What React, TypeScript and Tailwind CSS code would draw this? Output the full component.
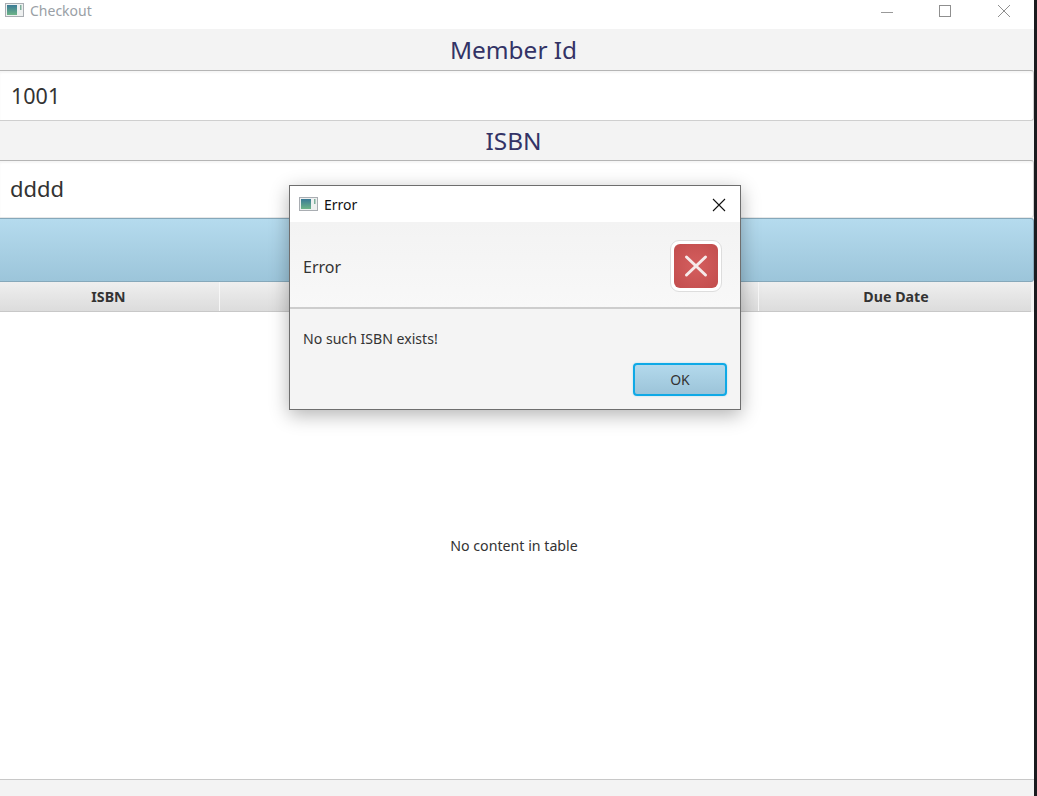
import React from "react";

const AppIcon = () => (
  <svg width="20" height="15" viewBox="0 0 20 15" className="shrink-0">
    <rect x="0.5" y="0.5" width="18" height="13" fill="#eef0f0" stroke="#a9adb2" />
    <defs>
      <linearGradient id="ic" x1="0" y1="0" x2="0" y2="1">
        <stop offset="0" stopColor="#3a7a96" />
        <stop offset="1" stopColor="#6db487" />
      </linearGradient>
    </defs>
    <rect x="2" y="2" width="10" height="10" fill="url(#ic)" />
    <rect x="15" y="2" width="1.5" height="5" fill="#7fb09c" />
  </svg>
);

const Label = ({ children, h }: { children: React.ReactNode; h: string }) => (
  <div className={`flex items-center justify-center bg-[#f3f3f3] pr-[7px] pt-[1px] text-[24.4px] leading-none text-[#333366] ${h}`}>
    {children}
  </div>
);

export default function App() {
  return (
    <div className="relative flex h-[796px] w-[1037px] overflow-hidden bg-[#1b1b1f] font-['Noto_Sans',sans-serif]">
      <div className="flex w-[1034px] flex-col bg-[#f3f3f3]">
        {/* Title bar */}
        <div className="flex h-[29px] items-center justify-between bg-white">
          <div className="flex items-center gap-[5px] pb-[8px] pl-[5px]">
            <AppIcon />
            <span className="text-[14px] leading-none text-[#9a9fa6]">Checkout</span>
          </div>
          <div className="flex items-center pb-[8px] text-[#8c8c8c]">
            <svg width="14" height="14" viewBox="0 0 14 14" className="mr-[44px]">
              <path d="M1 8.5H13" stroke="#999" strokeWidth="1" />
            </svg>
            <svg width="14" height="14" viewBox="0 0 14 14" className="mr-[45px]">
              <rect x="1.5" y="1.5" width="11" height="11" fill="none" stroke="#8f8f8f" strokeWidth="1" />
            </svg>
            <svg width="14" height="14" viewBox="0 0 14 14" className="mr-[23px]">
              <path d="M1 1L13 13M13 1L1 13" stroke="#8f8f8f" strokeWidth="1" />
            </svg>
          </div>
        </div>

        <Label h="h-[41px]">Member Id</Label>
        <div className="flex h-[51px] items-center rounded-r-[3px] border-y border-r border-t-[#b5b5b5] border-r-[#cfcfcf] border-b-[#cfcfcf] bg-white pl-[11px] text-[21.5px] leading-none text-[#333] shadow-[inset_0_2px_2px_rgba(0,0,0,0.04)]">
          1001
        </div>
        <Label h="h-[39px]">ISBN</Label>
        <div className="flex h-[58px] items-center rounded-r-[3px] border-y border-r border-t-[#b5b5b5] border-r-[#cfcfcf] border-b-[#e8e8e8] bg-white pb-[2px] pl-[10px] text-[22px] leading-none text-[#333] shadow-[inset_0_2px_2px_rgba(0,0,0,0.04)]">
          dddd
        </div>

        {/* Blue button bar */}
        <div className="h-[64px] rounded-r-[3px] border-y border-r border-y-[#86a8ba] border-r-[#86a8ba] bg-gradient-to-b from-[#b5dbee] to-[#9cc5da]" />

        {/* Table header */}
        <div className="mr-[3px] flex h-[30px] border-b border-[#c8c8c8] bg-gradient-to-b from-[#efefef] to-[#dcdcdc] text-[14.2px] font-bold leading-none text-[#333]">
          <div className="flex w-[220px] items-center justify-center border-r border-[#f7f7f7] pr-[2px] pt-[2px]">ISBN</div>
          <div className="flex w-[269px] border-r border-[#f7f7f7]" />
          <div className="flex w-[270px] border-r border-[#f7f7f7]" />
          <div className="flex flex-1 items-center justify-center pl-[2px] pt-[2px]">Due Date</div>
        </div>

        {/* Table body */}
        <div className="flex h-[467px] items-center justify-center bg-white pr-[6px] pt-[1px] text-[14.2px] leading-none text-[#333]">
          No content in table
        </div>

        {/* Footer */}
        <div className="flex-1 border-t border-[#c8c8c8] bg-[#f3f3f3]" />
      </div>

      {/* Dialog */}
      <div className="absolute left-[289px] top-[185px] flex h-[225px] w-[452px] flex-col border border-[#6e6e6e] bg-[#f4f4f4] shadow-[0_5px_18px_rgba(0,0,0,0.3)]">
        <div className="flex h-[36px] items-center justify-between bg-white pl-[9px] pr-[14px] pt-[1px]">
          <div className="flex items-center gap-[5px]">
            <AppIcon />
            <span className="text-[14px] leading-none text-[#111]">Error</span>
          </div>
          <svg width="14" height="14" viewBox="0 0 14 14">
            <path d="M1 1L13 13M13 1L1 13" stroke="#111" strokeWidth="1.1" />
          </svg>
        </div>
        <div className="flex h-[87px] items-center justify-between border-b-2 border-[#cdcdcd] bg-gradient-to-b from-[#f3f3f3] to-[#f8f8f8] pl-[13px] pr-[18px] pt-[3px]">
          <span className="pt-[2px] text-[16px] leading-none text-[#333]">Error</span>
          <div className="flex h-[52px] w-[52px] items-center justify-center rounded-[9px] border border-[#dddddd] bg-white">
            <div className="flex h-[44px] w-[44px] items-center justify-center rounded-[6px] bg-[radial-gradient(circle,#d45e5e,#c24d4d)]">
              <svg width="24" height="24" viewBox="0 0 24 24">
                <path d="M2.5 3L21.5 21M21.5 3L2.5 21" stroke="#f6eaea" strokeWidth="3" strokeLinecap="round" />
              </svg>
            </div>
          </div>
        </div>
        <div className="flex flex-1 flex-col px-[13px]">
          <div className="mt-[23px] text-[14.1px] leading-none text-[#333]">No such ISBN exists!</div>
          <div className="mt-[17px] flex justify-end">
            <div className="flex h-[33px] w-[94px] items-center justify-center rounded-[4px] border-2 border-[#0fa9e6] bg-gradient-to-b from-[#b3d9ec] to-[#9cc4d9] text-[14px] leading-none text-[#333] shadow-[0_0_2px_rgba(15,169,230,0.3)]">
              OK
            </div>
          </div>
        </div>
      </div>
    </div>
  );
}
